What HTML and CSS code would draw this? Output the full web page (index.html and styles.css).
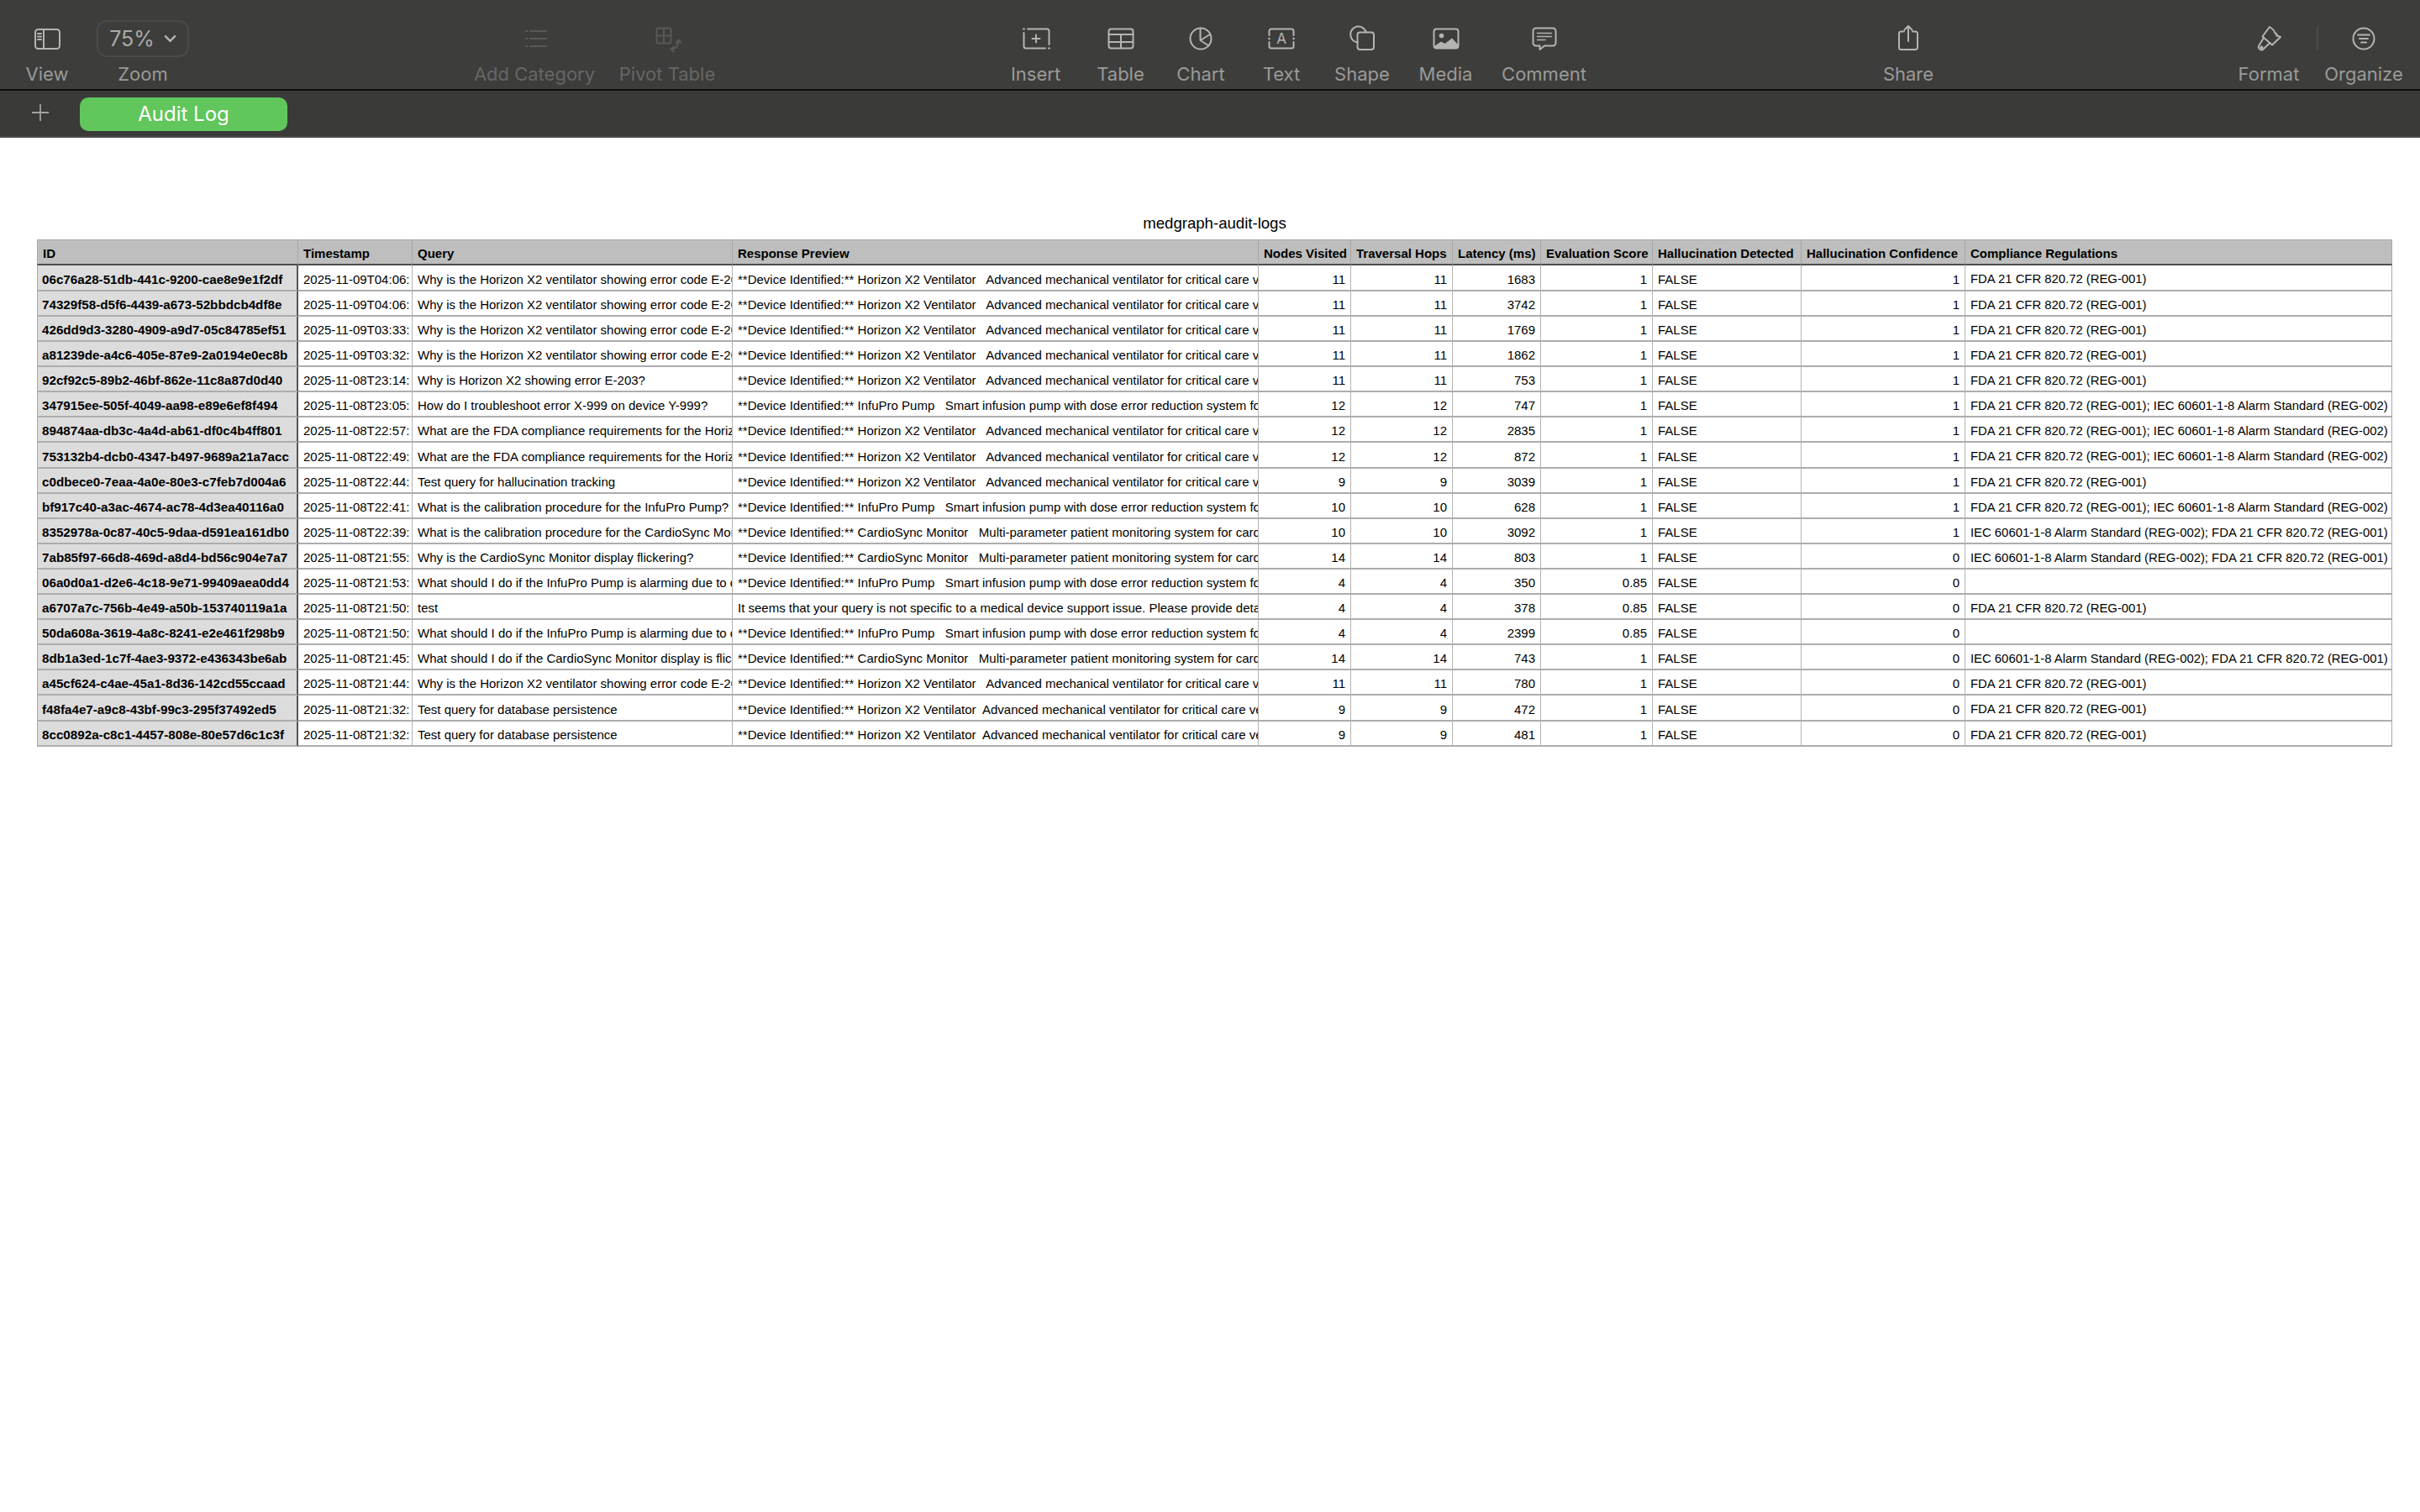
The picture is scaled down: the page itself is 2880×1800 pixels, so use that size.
FILE: index.html
```html
<!DOCTYPE html>
<html lang="en">
<head>
<meta charset="utf-8">
<title>medgraph-audit-logs</title>
<link rel="stylesheet" href="styles.css">
</head>
<body>
<header class="toolbar">
  <div class="tool w-view">
    <div class="icon"><svg viewBox="0 0 40 40"><rect x="6" y="9" width="29" height="23" rx="3.5"/><path d="M16 9V32M9 14h4M9 17.5h4M9 21h4"/></svg></div>
    <span class="label">View</span>
  </div>
  <div class="tool w-zoom">
    <div class="icon"><div class="zoombox"><span>75%</span><svg class="chev" viewBox="0 0 16 10"><path d="M2 2l6 6 6-6"/></svg></div></div>
    <span class="label">Zoom</span>
  </div>
  <div class="tool w-cat off gap-a">
    <div class="icon"><svg viewBox="0 0 40 40"><path d="M15 11H34M15 20H34M15 29H34M9.5 11h2M9.5 20h2M9.5 29h2"/></svg></div>
    <span class="label">Add Category</span>
  </div>
  <div class="tool w-pivot off">
    <div class="icon"><svg viewBox="0 0 40 40"><rect x="7.5" y="7.5" width="17" height="18" rx="2"/><path d="M16 7.5V25.500M7.500 16.500H24.500M33.500 23C33.500 28 31 32 25 32.500M30.500 25l3-4 3 4M28 29.500l-3.500 3 3.500 3"/></svg></div>
    <span class="label">Pivot Table</span>
  </div>
  <div class="tool w-insert gap-a">
    <div class="icon"><svg viewBox="0 0 40 40"><path d="M10 8.500H33a2.500 2.500 0 0 1 2.500 2.500V27M5.500 13V29a2.500 2.500 0 0 0 2.500 2.500H31M20 15.500v9M15.500 20h9"/><circle class="fill" cx="5.500" cy="8.500" r="1.300"/><circle class="fill" cx="35.500" cy="31.500" r="1.300"/></svg></div>
    <span class="label">Insert</span>
  </div>
  <div class="tool w-table">
    <div class="icon"><svg viewBox="0 0 40 40"><rect x="5.500" y="8.500" width="29" height="23" rx="3"/><path d="M5.500 15H34.500M5.500 24H34.500M20 15V31.500"/></svg></div>
    <span class="label">Table</span>
  </div>
  <div class="tool w-chart">
    <div class="icon"><svg viewBox="0 0 40 40"><circle cx="20" cy="20" r="12.500"/><path d="M19.500 7.500V22L31 15M19.500 22L29.500 28.500"/></svg></div>
    <span class="label">Chart</span>
  </div>
  <div class="tool w-text">
    <div class="icon"><svg viewBox="0 0 40 40"><path d="M5.500 16V11a2.500 2.500 0 0 1 2.500-2.500H32a2.500 2.500 0 0 1 2.500 2.500V16M5.500 24V29a2.500 2.500 0 0 0 2.500 2.500H32a2.500 2.500 0 0 0 2.500-2.500V24"/><circle class="fill" cx="5.500" cy="20" r="1.300"/><circle class="fill" cx="34.500" cy="20" r="1.300"/><text class="glyph" x="20" y="26" text-anchor="middle">A</text></svg></div>
    <span class="label">Text</span>
  </div>
  <div class="tool w-shape">
    <div class="icon"><svg viewBox="0 0 40 40"><path d="M14.500 24.400A9.500 9.500 0 1 1 24.800 12.500"/><rect x="14.500" y="12.500" width="19.500" height="20.500" rx="3"/></svg></div>
    <span class="label">Shape</span>
  </div>
  <div class="tool w-media">
    <div class="icon"><svg viewBox="0 0 40 40"><rect x="5.500" y="8.500" width="29" height="23" rx="3"/><circle class="fill" cx="14.500" cy="16.500" r="2.800"/><path class="fill" d="M6 29L14 23.500L18.500 26L27 19.500L34.500 27.500V29A2.500 2.500 0 0 1 32 31.500H8A2.500 2.500 0 0 1 6 29Z"/></svg></div>
    <span class="label">Media</span>
  </div>
  <div class="tool w-comment">
    <div class="icon"><svg viewBox="0 0 40 40"><path d="M10 7.500H30a3.500 3.500 0 0 1 3.500 3.500V25a3.500 3.500 0 0 1-3.500 3.500H20L14.500 33V28.500H10A3.500 3.500 0 0 1 6.500 25V11A3.500 3.500 0 0 1 10 7.500Z"/><path class="thin" d="M11.500 13.500H28.500M11.500 17.500H28.500M11.500 21.500H21"/></svg></div>
    <span class="label">Comment</span>
  </div>
  <div class="tool w-share gap-b">
    <div class="icon"><svg viewBox="0 0 40 40"><path d="M15 11.500H11.500a2.500 2.500 0 0 0-2.500 2.500V30.500a2.500 2.500 0 0 0 2.500 2.500H28.500a2.500 2.500 0 0 0 2.500-2.500V14a2.500 2.500 0 0 0-2.500-2.500H25M20 23V5M15.500 9.500L20 5l4.500 4.500"/></svg></div>
    <span class="label">Share</span>
  </div>
  <div class="tool w-format gap-c">
    <div class="icon"><svg viewBox="0 0 40 40"><path d="M21 6L12.500 17.500L24 27.500L34 18Q31 16 29.500 17Q30 14 27.500 13.500Q27 10 21 6Z"/><path d="M14 19L8.500 28a3.500 3.500 0 0 0 4.500 5L21.500 25"/><circle cx="11.500" cy="30.500" r="1"/></svg></div>
    <span class="label">Format</span>
  </div>
  <div class="tool w-organize">
    <div class="icon"><svg viewBox="0 0 40 40"><circle cx="20" cy="20" r="12.500"/><path d="M13 15.500H27M15 20H25M17 24.500H23"/></svg></div>
    <span class="label">Organize</span>
  </div>
</header>
<nav class="tabbar">
  <svg class="plus" viewBox="0 0 24 24"><path d="M12 2V22M2 12H22"/></svg>
  <div class="tab">Audit Log</div>
</nav>
<main class="sheet">
  <h1 class="title">medgraph-audit-logs</h1>
  <table class="grid">
    <colgroup>
      <col class="c-id"><col class="c-ts"><col class="c-q"><col class="c-r"><col class="c-n"><col class="c-h"><col class="c-l"><col class="c-e"><col class="c-d"><col class="c-c"><col class="c-reg">
    </colgroup>
    <thead>
      <tr><th>ID</th><th>Timestamp</th><th>Query</th><th>Response Preview</th><th>Nodes Visited</th><th>Traversal Hops</th><th>Latency (ms)</th><th>Evaluation Score</th><th>Hallucination Detected</th><th>Hallucination Confidence</th><th>Compliance Regulations</th></tr>
    </thead>
    <tbody>
      <tr class="tall"><th>06c76a28-51db-441c-9200-cae8e9e1f2df</th><td>2025-11-09T04:06:</td><td>Why is the Horizon X2 ventilator showing error code E-203?</td><td>**Device Identified:** Horizon X2 Ventilator   Advanced mechanical ventilator for critical care ventilation</td><td class="num">11</td><td class="num">11</td><td class="num">1683</td><td class="num">1</td><td>FALSE</td><td class="num">1</td><td>FDA 21 CFR 820.72 (REG-001)</td></tr>
      <tr><th>74329f58-d5f6-4439-a673-52bbdcb4df8e</th><td>2025-11-09T04:06:</td><td>Why is the Horizon X2 ventilator showing error code E-203?</td><td>**Device Identified:** Horizon X2 Ventilator   Advanced mechanical ventilator for critical care ventilation</td><td class="num">11</td><td class="num">11</td><td class="num">3742</td><td class="num">1</td><td>FALSE</td><td class="num">1</td><td>FDA 21 CFR 820.72 (REG-001)</td></tr>
      <tr><th>426dd9d3-3280-4909-a9d7-05c84785ef51</th><td>2025-11-09T03:33:</td><td>Why is the Horizon X2 ventilator showing error code E-203?</td><td>**Device Identified:** Horizon X2 Ventilator   Advanced mechanical ventilator for critical care ventilation</td><td class="num">11</td><td class="num">11</td><td class="num">1769</td><td class="num">1</td><td>FALSE</td><td class="num">1</td><td>FDA 21 CFR 820.72 (REG-001)</td></tr>
      <tr><th>a81239de-a4c6-405e-87e9-2a0194e0ec8b</th><td>2025-11-09T03:32:</td><td>Why is the Horizon X2 ventilator showing error code E-203?</td><td>**Device Identified:** Horizon X2 Ventilator   Advanced mechanical ventilator for critical care ventilation</td><td class="num">11</td><td class="num">11</td><td class="num">1862</td><td class="num">1</td><td>FALSE</td><td class="num">1</td><td>FDA 21 CFR 820.72 (REG-001)</td></tr>
      <tr><th>92cf92c5-89b2-46bf-862e-11c8a87d0d40</th><td>2025-11-08T23:14:</td><td>Why is Horizon X2 showing error E-203?</td><td>**Device Identified:** Horizon X2 Ventilator   Advanced mechanical ventilator for critical care ventilation</td><td class="num">11</td><td class="num">11</td><td class="num">753</td><td class="num">1</td><td>FALSE</td><td class="num">1</td><td>FDA 21 CFR 820.72 (REG-001)</td></tr>
      <tr><th>347915ee-505f-4049-aa98-e89e6ef8f494</th><td>2025-11-08T23:05:</td><td>How do I troubleshoot error X-999 on device Y-999?</td><td>**Device Identified:** InfuPro Pump   Smart infusion pump with dose error reduction system for hospitals</td><td class="num">12</td><td class="num">12</td><td class="num">747</td><td class="num">1</td><td>FALSE</td><td class="num">1</td><td>FDA 21 CFR 820.72 (REG-001); IEC 60601-1-8 Alarm Standard (REG-002)</td></tr>
      <tr><th>894874aa-db3c-4a4d-ab61-df0c4b4ff801</th><td>2025-11-08T22:57:</td><td>What are the FDA compliance requirements for the Horizon X2?</td><td>**Device Identified:** Horizon X2 Ventilator   Advanced mechanical ventilator for critical care ventilation</td><td class="num">12</td><td class="num">12</td><td class="num">2835</td><td class="num">1</td><td>FALSE</td><td class="num">1</td><td>FDA 21 CFR 820.72 (REG-001); IEC 60601-1-8 Alarm Standard (REG-002)</td></tr>
      <tr class="tall"><th>753132b4-dcb0-4347-b497-9689a21a7acc</th><td>2025-11-08T22:49:</td><td>What are the FDA compliance requirements for the Horizon X2?</td><td>**Device Identified:** Horizon X2 Ventilator   Advanced mechanical ventilator for critical care ventilation</td><td class="num">12</td><td class="num">12</td><td class="num">872</td><td class="num">1</td><td>FALSE</td><td class="num">1</td><td>FDA 21 CFR 820.72 (REG-001); IEC 60601-1-8 Alarm Standard (REG-002)</td></tr>
      <tr><th>c0dbece0-7eaa-4a0e-80e3-c7feb7d004a6</th><td>2025-11-08T22:44:</td><td>Test query for hallucination tracking</td><td>**Device Identified:** Horizon X2 Ventilator   Advanced mechanical ventilator for critical care ventilation</td><td class="num">9</td><td class="num">9</td><td class="num">3039</td><td class="num">1</td><td>FALSE</td><td class="num">1</td><td>FDA 21 CFR 820.72 (REG-001)</td></tr>
      <tr><th>bf917c40-a3ac-4674-ac78-4d3ea40116a0</th><td>2025-11-08T22:41:</td><td>What is the calibration procedure for the InfuPro Pump?</td><td>**Device Identified:** InfuPro Pump   Smart infusion pump with dose error reduction system for hospitals</td><td class="num">10</td><td class="num">10</td><td class="num">628</td><td class="num">1</td><td>FALSE</td><td class="num">1</td><td>FDA 21 CFR 820.72 (REG-001); IEC 60601-1-8 Alarm Standard (REG-002)</td></tr>
      <tr><th>8352978a-0c87-40c5-9daa-d591ea161db0</th><td>2025-11-08T22:39:</td><td>What is the calibration procedure for the CardioSync Monitor?</td><td>**Device Identified:** CardioSync Monitor   Multi-parameter patient monitoring system for cardiac care</td><td class="num">10</td><td class="num">10</td><td class="num">3092</td><td class="num">1</td><td>FALSE</td><td class="num">1</td><td>IEC 60601-1-8 Alarm Standard (REG-002); FDA 21 CFR 820.72 (REG-001)</td></tr>
      <tr><th>7ab85f97-66d8-469d-a8d4-bd56c904e7a7</th><td>2025-11-08T21:55:</td><td>Why is the CardioSync Monitor display flickering?</td><td>**Device Identified:** CardioSync Monitor   Multi-parameter patient monitoring system for cardiac care</td><td class="num">14</td><td class="num">14</td><td class="num">803</td><td class="num">1</td><td>FALSE</td><td class="num">0</td><td>IEC 60601-1-8 Alarm Standard (REG-002); FDA 21 CFR 820.72 (REG-001)</td></tr>
      <tr><th>06a0d0a1-d2e6-4c18-9e71-99409aea0dd4</th><td>2025-11-08T21:53:</td><td>What should I do if the InfuPro Pump is alarming due to occlusion?</td><td>**Device Identified:** InfuPro Pump   Smart infusion pump with dose error reduction system for hospitals</td><td class="num">4</td><td class="num">4</td><td class="num">350</td><td class="num">0.85</td><td>FALSE</td><td class="num">0</td><td></td></tr>
      <tr><th>a6707a7c-756b-4e49-a50b-153740119a1a</th><td>2025-11-08T21:50:</td><td>test</td><td>It seems that your query is not specific to a medical device support issue. Please provide details</td><td class="num">4</td><td class="num">4</td><td class="num">378</td><td class="num">0.85</td><td>FALSE</td><td class="num">0</td><td>FDA 21 CFR 820.72 (REG-001)</td></tr>
      <tr><th>50da608a-3619-4a8c-8241-e2e461f298b9</th><td>2025-11-08T21:50:</td><td>What should I do if the InfuPro Pump is alarming due to occlusion?</td><td>**Device Identified:** InfuPro Pump   Smart infusion pump with dose error reduction system for hospitals</td><td class="num">4</td><td class="num">4</td><td class="num">2399</td><td class="num">0.85</td><td>FALSE</td><td class="num">0</td><td></td></tr>
      <tr><th>8db1a3ed-1c7f-4ae3-9372-e436343be6ab</th><td>2025-11-08T21:45:</td><td>What should I do if the CardioSync Monitor display is flickering?</td><td>**Device Identified:** CardioSync Monitor   Multi-parameter patient monitoring system for cardiac care</td><td class="num">14</td><td class="num">14</td><td class="num">743</td><td class="num">1</td><td>FALSE</td><td class="num">0</td><td>IEC 60601-1-8 Alarm Standard (REG-002); FDA 21 CFR 820.72 (REG-001)</td></tr>
      <tr><th>a45cf624-c4ae-45a1-8d36-142cd55ccaad</th><td>2025-11-08T21:44:</td><td>Why is the Horizon X2 ventilator showing error code E-203?</td><td>**Device Identified:** Horizon X2 Ventilator   Advanced mechanical ventilator for critical care ventilation</td><td class="num">11</td><td class="num">11</td><td class="num">780</td><td class="num">1</td><td>FALSE</td><td class="num">0</td><td>FDA 21 CFR 820.72 (REG-001)</td></tr>
      <tr class="tall"><th>f48fa4e7-a9c8-43bf-99c3-295f37492ed5</th><td>2025-11-08T21:32:</td><td>Test query for database persistence</td><td>**Device Identified:** Horizon X2 Ventilator  Advanced mechanical ventilator for critical care ventilation</td><td class="num">9</td><td class="num">9</td><td class="num">472</td><td class="num">1</td><td>FALSE</td><td class="num">0</td><td>FDA 21 CFR 820.72 (REG-001)</td></tr>
      <tr><th>8cc0892a-c8c1-4457-808e-80e57d6c1c3f</th><td>2025-11-08T21:32:</td><td>Test query for database persistence</td><td>**Device Identified:** Horizon X2 Ventilator  Advanced mechanical ventilator for critical care ventilation</td><td class="num">9</td><td class="num">9</td><td class="num">481</td><td class="num">1</td><td>FALSE</td><td class="num">0</td><td>FDA 21 CFR 820.72 (REG-001)</td></tr>
    </tbody>
  </table>
</main>
</body>
</html>
```
FILE: styles.css
```css
html, body { margin: 0; padding: 0; background: #fff; }
body { width: 2880px; height: 1800px; overflow: hidden; font-family: "Liberation Sans", Arial, sans-serif; }

.toolbar {
  display: flex;
  box-sizing: border-box;
  height: 108px;
  padding: 24px 0 0 8px;
  background: #3d3d3b;
  border-bottom: 2px solid #0f0f0f;
}
.tool { display: flex; flex-direction: column; align-items: center; flex: none; position: relative; color: #9a9a98; }
.tool.off { color: #666665; }
.icon { display: flex; align-items: center; justify-content: center; height: 44px; }
.icon > svg { width: 40px; height: 40px; fill: none; stroke: #b4b4b2; stroke-width: 2; stroke-linecap: round; stroke-linejoin: round; }
.off .icon > svg { stroke: #585857; }
.icon .fill { fill: #b4b4b2; stroke: none; }
.icon .thin { stroke-width: 1.6; }
.icon .glyph { font-family: Inter, sans-serif; font-size: 17px; fill: #b4b4b2; stroke: none; }
.label { margin-top: 6px; font-family: Inter, "Liberation Sans", sans-serif; font-size: 22px; line-height: 28px; white-space: nowrap; }

.w-view { width: 96px; }
.w-zoom { width: 132px; }
.w-cat { width: 170px; }
.w-pivot { width: 146px; }
.w-insert { width: 101px; }
.w-table { width: 101px; }
.w-chart { width: 90px; }
.w-text { width: 102px; }
.w-shape { width: 90px; }
.w-media { width: 109px; }
.w-comment { width: 125px; }
.w-share { width: 120px; }
.w-format { width: 130px; }
.w-organize { width: 96px; }
.gap-a { margin-left: 315px; }
.gap-b { margin-left: 311px; }
.gap-c { margin-left: 304px; }
.w-format::after { content: ""; position: absolute; left: 122px; top: 8px; width: 2px; height: 28px; background: #4d4d4b; }

.zoombox {
  display: flex; align-items: center; justify-content: center; gap: 11px;
  box-sizing: border-box; width: 110px; height: 44px;
  border: 2px solid #4a4a48; border-radius: 12px;
  font-family: Inter, sans-serif; font-size: 25px; color: #aaaaa8;
}
.chev { width: 15px; height: 10px; fill: none; stroke: #b4b4b2; stroke-width: 2.500; stroke-linecap: round; stroke-linejoin: round; }

.tabbar {
  display: flex; align-items: flex-start; box-sizing: border-box;
  height: 56px; padding: 8px 0 0 36px;
  background: #3a3a39;
  border-bottom: 2px solid #4d4d4d;
}
.plus { width: 24px; height: 24px; margin: 6px 35px 0 0; fill: none; stroke: #a2a2a0; stroke-width: 1.800; }
.tab {
  width: 247px; height: 40px; line-height: 40px; text-align: center;
  background: #61c65b; border-radius: 10px; color: #fff;
  font-family: Inter, sans-serif; font-size: 24px;
}

.sheet { padding: 0 33px 0 44px; }
.title { margin: 90px 0 0; height: 31px; font-size: 18.6px; line-height: 24px; font-weight: 400; text-align: center; color: #000; }

.grid { table-layout: fixed; width: 2803px; border-collapse: separate; border-spacing: 0; font-size: 15px; color: #000; border-top: 1px solid #a9a9a9; }
.c-id { width: 311px; } .c-ts { width: 136px; } .c-q { width: 381px; } .c-r { width: 626px; }
.c-n { width: 110px; } .c-h { width: 121px; } .c-l { width: 105px; } .c-e { width: 133px; }
.c-d { width: 177px; } .c-c { width: 195px; } .c-reg { width: 508px; }

.grid th, .grid td {
  box-sizing: border-box; padding: 3px 6px 0; height: 30px;
  overflow: hidden; white-space: pre; text-align: left;
  border-right: 1px solid #b4b4b4; border-bottom: 2px solid #adadad;
}
.grid tr > :first-child { border-left: 1px solid #a9a9a9; }
.grid tr > :last-child { border-right: 1px solid #a9a9a9; }
.grid tr.tall > * { height: 31px; }
.grid thead th { height: 30px; padding-top: 2px; background: #bdbebd; font-size: 15px; font-weight: 700; border-right-color: #a6a6a6; border-bottom-color: #4d4d4d; }
.grid tbody th { padding-left: 5px; background: #dcdcdc; font-size: 15.2px; font-weight: 700; border-right: 2px solid #555; }
.grid tbody td:last-child { font-size: 14.85px; }
.grid .num { text-align: right; }
```
